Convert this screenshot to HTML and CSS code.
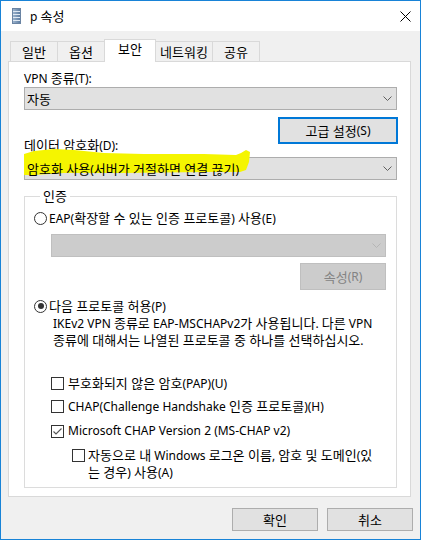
FILE: index.html
```html
<!DOCTYPE html>
<html>
<head>
    <title>p 속성</title>
    <link rel="stylesheet" href="styles.css">
</head>
<body>
<div class="window">
    <div class="titlebar">
        <svg class="app-icon" width="9" height="16" viewBox="0 0 9 16">
            <defs>
                <linearGradient id="ic" x1="0" y1="0" x2="1" y2="0">
                    <stop offset="0" stop-color="#9fb6cf"/>
                    <stop offset="1" stop-color="#5b7ba0"/>
                </linearGradient>
            </defs>
            <rect x="0.5" y="0.5" width="8" height="15" fill="url(#ic)" stroke="#6a84a3"/>
            <path d="M1 3.5h7M1 6.5h7M1 9.5h7M1 12.5h7" stroke="#dfe8f2" stroke-width="1"/>
        </svg>
        <span class="title">p <span class="ko">속성</span></span>
        <svg class="close" width="11" height="11" viewBox="0 0 11 11">
            <path d="M0.5 0.5L10.5 10.5M10.5 0.5L0.5 10.5" stroke="#000" stroke-width="1"/>
        </svg>
    </div>

    <div class="content">
        <div class="tabs">
            <div class="tab ko w48">일반</div>
            <div class="tab ko w48">옵션</div>
            <div class="tab ko active">보안</div>
            <div class="tab ko w58">네트워킹</div>
            <div class="tab ko w48">공유</div>
        </div>

        <div class="panel">
            <div class="label vpn-label">VPN <span class="ko">종류</span>(T):</div>
            <div class="combo vpn-combo">
                <span class="combo-text ko">자동</span>
                <svg class="chev" width="9" height="5" viewBox="0 0 9 5"><path d="M0.5 0.5L4.5 4.5L8.5 0.5" fill="none" stroke="#606060"/></svg>
            </div>

            <div class="adv-row">
                <div class="label enc-label"><span class="ko">데이터 암호화</span>(D):</div>
                <div class="btn default"><span class="ko">고급 설정</span>(S)</div>
            </div>

            <svg class="highlight" width="226" height="28" viewBox="0 0 226 28">
                <path d="M0 6 L10 3 L30 1 L50 2 L80 5 L120 6 L180 6 L212 7 L217 5 L222 2 L226 4 L225 14 L222 22 L216 24 L180 24 L100 25 L40 25 L10 27 L0 27 Z" fill="#f5f500"/>
            </svg>
            <div class="combo enc-combo">
                <span class="combo-text"><span class="ko">암호화 사용</span>(<span class="ko">서버가 거절하면 연결 끊기</span>)</span>
                <svg class="chev" width="9" height="5" viewBox="0 0 9 5"><path d="M0.5 0.5L4.5 4.5L8.5 0.5" fill="none" stroke="#606060"/></svg>
            </div>

            <fieldset class="auth">
                <legend class="ko">인증</legend>

                <div class="opt eap">
                    <span class="radio"></span>
                    <span>EAP(<span class="ko">확장할 수 있는 인증 프로토콜</span>) <span class="ko">사용</span>(E)</span>
                </div>
                <div class="combo disabled eap-combo">
                    <span class="combo-text"></span>
                    <svg class="chev" width="9" height="5" viewBox="0 0 9 5"><path d="M0.5 0.5L4.5 4.5L8.5 0.5" fill="none" stroke="#b5b5b5"/></svg>
                </div>
                <div class="btn disabled props"><span class="ko">속성</span>(R)</div>

                <div class="opt allow">
                    <span class="radio on"></span>
                    <span><span class="ko">다음 프로토콜 허용</span>(P)</span>
                </div>
                <p class="note">IKEv2 VPN <span class="ko">종류로</span> EAP-MSCHAPv2<span class="ko">가 사용됩니다</span>. <span class="ko">다른</span> VPN<br><span class="ko">종류에 대해서는 나열된 프로토콜 중 하나를 선택하십시오</span>.</p>

                <div class="opt chk-row pap">
                    <span class="check"></span>
                    <span><span class="ko">부호화되지 않은 암호</span>(PAP)(U)</span>
                </div>
                <div class="opt chk-row chap">
                    <span class="check"></span>
                    <span>CHAP(Challenge Handshake <span class="ko">인증 프로토콜</span>)(H)</span>
                </div>
                <div class="opt chk-row mschap">
                    <span class="check">
                        <svg width="11" height="11" viewBox="0 0 11 11"><path d="M1.5 5.5L4 8L9.5 2.5" fill="none" stroke="#555" stroke-width="1.1"/></svg>
                    </span>
                    <span>Microsoft CHAP Version 2 (MS-CHAP v2)</span>
                </div>
                <div class="opt chk-row auto">
                    <span class="check"></span>
                    <span><span class="ko">자동으로 내</span> Windows <span class="ko">로그온 이름</span>, <span class="ko">암호 및 도메인</span>(<span class="ko">있</span><br><span class="ko">는 경우</span>) <span class="ko">사용</span>(A)</span>
                </div>
            </fieldset>
        </div>

        <div class="footer">
            <div class="btn dlg ko">확인</div>
            <div class="btn dlg ko">취소</div>
        </div>
    </div>
</div>
</body>
</html>
```

FILE: styles.css
```css
body {
    margin: 0;
    font-family: "Noto Sans", "Noto Sans CJK KR", sans-serif;
    font-size: 12px;
    line-height: 16px;
    color: #000;
}
/* hangul from Noto is narrower than Malgun Gothic, so it runs a size up */
.ko {
    font-size: 13px;
}
.window {
    width: 421px;
    height: 540px;
    box-sizing: border-box;
    border: 1px solid #1883d7;
    background-color: #f0f0f0;
}
.titlebar {
    height: 30px;
    background-color: #fff;
    display: flex;
    align-items: center;
}
.app-icon {
    margin-left: 11px;
}
.title {
    margin-left: 9px;
}
.close {
    margin-left: auto;
    margin-right: 9px;
}
.content {
    padding: 8px 7px 0 7px;
}
.tabs {
    display: flex;
    align-items: flex-end;
    height: 22px;
    margin-left: 2px;
}
.tab {
    height: 20px;
    box-sizing: border-box;
    border: 1px solid #d9d9d9;
    border-bottom: none;
    margin-left: -1px;
    padding-top: 2px;
    line-height: 17px;
    text-align: center;
    background-color: #f0f0f0;
}
.tab:first-child {
    margin-left: 0;
}
.w48 {
    width: 48px;
}
.w58 {
    width: 58px;
}
.tab.active {
    width: 52px;
    height: 23px;
    margin-bottom: -1px;
    padding-top: 1px;
    background-color: #fff;
    position: relative;
    z-index: 1;
}
.panel {
    height: 436px;
    box-sizing: border-box;
    margin-right: 2px;
    border: 1px solid #d9d9d9;
    background-color: #fff;
    padding: 8px 13px 0 15px;
    position: relative;
}
.label {
    height: 16px;
}
.combo {
    height: 23px;
    box-sizing: border-box;
    border: 1px solid #adadad;
    background-color: #e1e1e1;
    display: flex;
    align-items: center;
    padding: 0 4px 0 2px;
}
.combo-text {
    flex: 1;
    height: 16px;
    position: relative;
    z-index: 1;
    white-space: nowrap;
}
.vpn-combo {
    margin-top: 1px;
}
.adv-row {
    display: flex;
    justify-content: space-between;
    align-items: flex-start;
    margin-top: 7px;
}
.enc-label {
    margin-top: 20px;
}
.btn {
    box-sizing: border-box;
    border: 1px solid #adadad;
    background-color: #e1e1e1;
    display: flex;
    align-items: center;
    justify-content: center;
}
.btn.default {
    width: 120px;
    height: 27px;
    margin-right: -1px;
    border: 2px solid #0078d7;
}
.enc-combo {
    margin-top: 4px;
}
.highlight {
    position: absolute;
    left: 15px;
    top: 86px;
    z-index: 0;
}
.auth {
    margin: 8px 0 0 0;
    padding: 0 10px 8px 9px;
    border: 1px solid #dcdcdc;
    min-width: 0;
}
.auth legend {
    margin-left: 6px;
    padding: 0 3px;
    height: 16px;
    line-height: 16px;
}
.opt {
    display: flex;
    align-items: center;
    height: 16px;
    white-space: nowrap;
}
.radio {
    width: 13px;
    height: 13px;
    box-sizing: border-box;
    border: 1px solid #333;
    border-radius: 50%;
    margin-right: 2px;
    display: flex;
    align-items: center;
    justify-content: center;
}
.radio.on::after {
    content: "";
    width: 6px;
    height: 6px;
    border-radius: 50%;
    background-color: #333;
}
.eap {
    margin-top: 6px;
}
.combo.disabled {
    background-color: #cccccc;
    border-color: #bfbfbf;
}
.eap-combo {
    margin: 8px 0 0 17px;
}
.btn.disabled {
    background-color: #cccccc;
    border-color: #bfbfbf;
    color: #838383;
}
.props {
    width: 86px;
    height: 27px;
    margin: 6px 0 0 auto;
}
.allow {
    margin-top: 8px;
}
.note {
    margin: 1px 0 0 19px;
    height: 32px;
    white-space: nowrap;
}
.chk-row {
    margin-left: 17px;
}
.check {
    width: 13px;
    height: 13px;
    box-sizing: border-box;
    border: 1px solid #333;
    margin-right: 4px;
    flex-shrink: 0;
}
.check svg {
    display: block;
}
.pap {
    margin-top: 28px;
}
.chap {
    margin-top: 7px;
}
.mschap {
    margin-top: 9px;
}
.auto {
    margin-top: 8px;
    margin-left: 38px;
    height: 32px;
    align-items: flex-start;
}
.auto .check {
    margin-top: 2px;
    margin-right: 3px;
}
.footer {
    display: flex;
    justify-content: flex-end;
    gap: 9px;
    margin-top: 11px;
}
.btn.dlg {
    width: 86px;
    height: 23px;
}
```
